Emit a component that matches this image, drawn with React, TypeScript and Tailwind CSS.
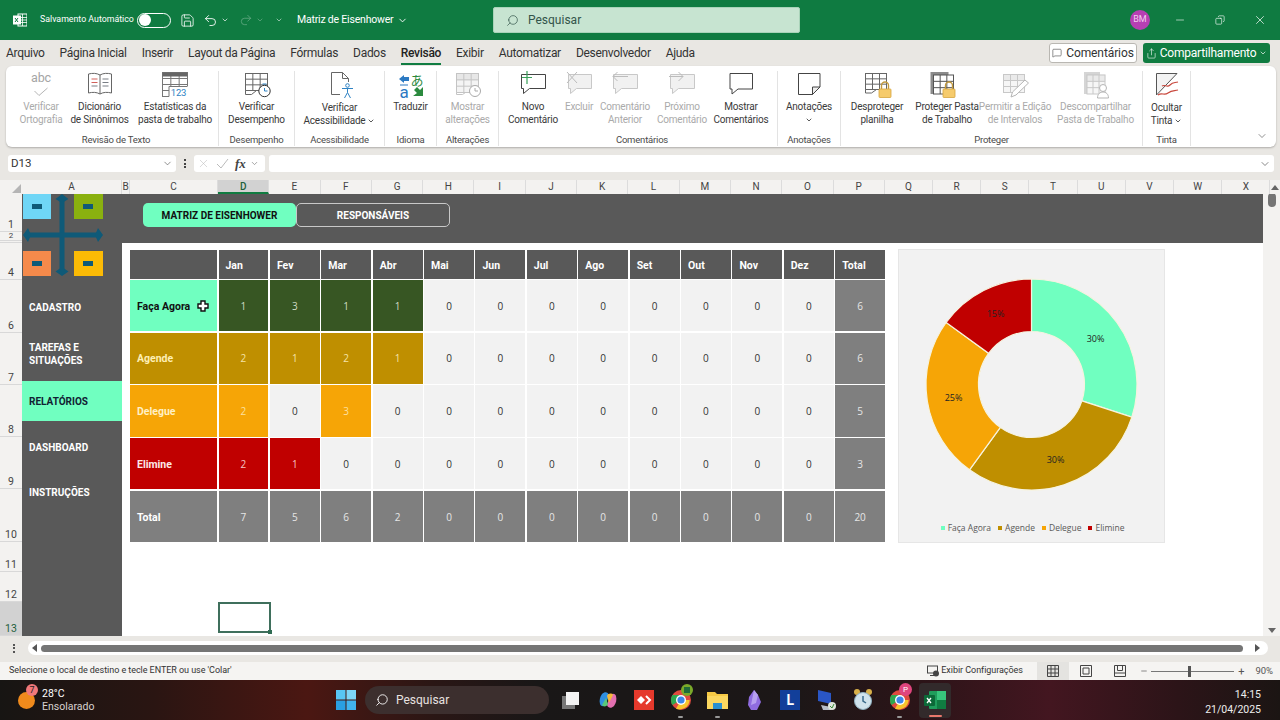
import React from "react";
import { ChevronDown, Copy, Minus, Search, Undo2, Redo2, X, Save, MessageSquare, Share } from "lucide-react";

const GridLines = ({ x = 4, y = 3, w = 24, h = 22, c = "#555", cols = 3, rows = 3, head = false, fill = "#fff" }: any) => (
  <g stroke={c} strokeWidth="1" fill="none">
    <rect x={x} y={y} width={w} height={h} fill={fill} />
    {head && <rect x={x} y={y} width={w} height={h / rows} fill={c} opacity=".25" />}
    {Array.from({ length: cols - 1 }).map((_, i) => (
      <line key={i} x1={x + ((i + 1) * w) / cols} x2={x + ((i + 1) * w) / cols} y1={y} y2={y + h} />
    ))}
    {Array.from({ length: rows - 1 }).map((_, i) => (
      <line key={i} y1={y + ((i + 1) * h) / rows} y2={y + ((i + 1) * h) / rows} x1={x} x2={x + w} />
    ))}
  </g>
);

const Bubble = ({ c = "#444", x = 5, y = 5, w = 25, h = 16, fill = "#fff" }: any) => (
  <path
    d={`M${x} ${y}H${x + w}V${y + h}H${x + 8}L${x + 2} ${y + h + 5}V${y + h}H${x}Z`}
    fill={fill}
    stroke={c}
    strokeWidth="1"
  />
);

const Lock = ({ x = 21, y = 10 }: any) => (
  <g>
    <path d={`M${x + 2.5} ${y + 8}v-3.5a3.5 3.5 0 0 1 7 0v3.5`} fill="none" stroke="#c29a3e" strokeWidth="1.4" />
    <rect x={x} y={y + 8} width="12" height="8.5" rx=".8" fill="#f6cb6c" stroke="#d5a53f" strokeWidth=".8" />
  </g>
);

const icons: Record<string, React.ReactNode> = {
  spell: (
    <g>
      <text x="18" y="11" textAnchor="middle" fontSize="12.5" fill="#a5a5a5" fontFamily="Roboto, sans-serif">abc</text>
      <path d="M11.5 20l4.5 4.5 8.5-7.5" fill="none" stroke="#b5b5b5" strokeWidth="1" />
    </g>
  ),
  book: (
    <g>
      <path d="M6.5 3c4-1 8-1 11.5 1 3.5-2 7.5-2 11.5-1v19c-4-1-8-1-11.5 1-3.5-2-7.5-2-11.5-1z" fill="#fff" stroke="#666" />
      <line x1="18" y1="4" x2="18" y2="23" stroke="#666" />
      <path d="M9.5 8h6M9.5 11.5h6" stroke="#d1605a" />
      <path d="M9.5 15h6M20.5 8h6M20.5 11.5h6M20.5 15h6" stroke="#7a7f86" />
    </g>
  ),
  stats: (
    <g>
      <GridLines x={5.5} y={1.5} w={25} h={24} cols={3} rows={4} c="#777" />
      <rect x="5.5" y="1.5" width="25" height="4" fill="#666" />
      <rect x="12" y="15" width="20" height="11" fill="#fff" />
      <path d="M5.5 25.5H12V15.5H30.5" fill="none" stroke="#777" />
      <text x="21.5" y="25" textAnchor="middle" fontSize="9.5" fill="#2f83c4" fontFamily="Roboto, sans-serif">123</text>
    </g>
  ),
  perf: (
    <g>
      <GridLines x={6.5} y={2.5} w={22} h={17} c="#666" />
      <path d="M6.5 19.5v4h6l5-4z" fill="#fff" stroke="#666" />
      <circle cx="25.5" cy="20" r="5.7" fill="#fff" stroke="#333" />
      <path d="M25.5 17V20h3" fill="none" stroke="#2f83c4" />
      <path d="M23.5 13h4" stroke="#2f83c4" />
    </g>
  ),
  access: (
    <g>
      <path d="M9.5 1.5h11l6 6v16h-17z" fill="#fff" stroke="#666" />
      <path d="M20.5 1.5v6h6" fill="none" stroke="#666" />
      <rect x="18" y="11" width="14" height="18" fill="#fff" />
      <circle cx="25.5" cy="14.5" r="1.8" fill="none" stroke="#2f83c4" />
      <path d="M20 17.5h11M25.5 17.5v4l-3 5.5M25.5 21.5l3 5.5" fill="none" stroke="#2f83c4" />
    </g>
  ),
  translate: (
    <g>
      <path d="M6 8l5-4v8z" fill="#2b79c2" />
      <rect x="10" y="6" width="6" height="4" fill="#2b79c2" />
      <path d="M7 14h8" stroke="#2b79c2" />
      <text x="6.5" y="27" fontSize="17" fill="#2b79c2" fontFamily="Roboto, sans-serif">a</text>
      <text x="17.5" y="14" fontSize="13" fill="#2b8a3e" fontFamily="'Noto Sans CJK JP', sans-serif">あ</text>
      <path d="M30 25H20l4-3-3-3 3-3 3 3 3-3z" fill="#2b8a3e" />
    </g>
  ),
  changes: (
    <g>
      <GridLines x={6.5} y={2.5} w={22} h={19} c="#c4c4c4" head fill="#f4f4f4" />
      <path d="M6.5 21.5v2h6l3-2z" fill="#fff" stroke="#c4c4c4" />
      <circle cx="25" cy="20" r="5.5" fill="#fff" stroke="#aaa" />
      <path d="M25 17v3h3" fill="none" stroke="#aaa" />
    </g>
  ),
  newc: (
    <g>
      <Bubble c="#444" x={6.5} y={3.5} w={24} h={14} />
      <path d="M12 0v13M7 6.5h10" stroke="#39a15a" strokeWidth="1.2" />
    </g>
  ),
  del: (
    <g>
      <Bubble c="#c8c8c8" x={7.5} y={3.5} w={23} h={14} fill="#f1f1f1" />
      <path d="M6 1l10 11M16 1L6 12" stroke="#bcbcbc" />
    </g>
  ),
  prev: (
    <g>
      <Bubble c="#c8c8c8" x={6.5} y={3.5} w={24} h={14} fill="#f1f1f1" />
      <path d="M21 5.5H6M10.5 1L6 5.5l4.5 4.5" fill="none" stroke="#bcbcbc" />
    </g>
  ),
  next: (
    <g>
      <Bubble c="#c8c8c8" x={6.5} y={3.5} w={24} h={14} fill="#f1f1f1" />
      <path d="M5 5.5h14M14.5 1L19 5.5 14.5 10" fill="none" stroke="#bcbcbc" />
    </g>
  ),
  show: <Bubble c="#444" x={7} y={2.5} w={22.5} h={15.5} />,
  note: (
    <g>
      <path d="M7.5 2.5h21.5v13.5l-7.5 7.5H7.5z" fill="#fff" stroke="#444" />
      <path d="M29 16h-7.5v7.5z" fill="#eee" stroke="#444" />
    </g>
  ),
  unprotect: (
    <g>
      <GridLines x={6.5} y={2.5} w={21} h={16} c="#666" />
      <path d="M6.5 18.5v3.5h6l5-3.5z" fill="#fff" stroke="#666" />
      <Lock x={20} y={10} />
    </g>
  ),
  protect: (
    <g>
      <rect x="1.5" y="1" width="18" height="22" fill="#8b8b8b" />
      <GridLines x={4.5} y={4} w={20} h={19} c="#555" />
      <Lock x={14} y={10} />
    </g>
  ),
  edit: (
    <g>
      <GridLines x={6.5} y={3.5} w={21} h={18} c="#c8c8c8" head fill="#f6f6f6" />
      <path d="M14 26l1.5-5L28 9l3.5 3L19 24z" fill="#fff" stroke="#b5b5b5" />
    </g>
  ),
  unshare: (
    <g>
      <rect x="6" y="1" width="16" height="22" fill="#d5d5d5" />
      <GridLines x={9} y={4} w={18} h={19} c="#c8c8c8" head fill="#f6f6f6" />
      <circle cx="25" cy="17" r="3.5" fill="#fff" stroke="#b5b5b5" />
      <path d="M19.5 27c0-4 2.5-6 5.5-6s5.5 2 5.5 6z" fill="#fff" stroke="#b5b5b5" />
    </g>
  ),
  ink: (
    <g>
      <path d="M7.5 2.5h20.5L7.5 24z" fill="#f3f3f3" stroke="#555" />
      <path d="M13 15c3-2 5 2 8-1s4-2 8-3" fill="none" stroke="#c9483d" strokeWidth="1.2" />
      <path d="M9 24c4-3 6 1 10-2s6-2 10-3" fill="none" stroke="#c9483d" strokeWidth="1.2" />
    </g>
  ),
};

type Item = { w: number; lines: string[]; icon: string; muted?: boolean; chev?: "inline" | "below"; low?: boolean };

const groups: { label: string; w: number; pl?: number; items: Item[] }[] = [
  {
    label: "Revisão de Texto",
    w: 205,
    items: [
      { w: 54, lines: ["Verificar", "Ortografia"], icon: "spell", muted: true },
      { w: 63, lines: ["Dicionário", "de Sinônimos"], icon: "book" },
      { w: 88, lines: ["Estatísticas da", "pasta de trabalho"], icon: "stats" },
    ],
  },
  { label: "Desempenho", w: 76, items: [{ w: 75, lines: ["Verificar", "Desempenho"], icon: "perf" }] },
  { label: "Acessibilidade", w: 90, items: [{ w: 89, lines: ["Verificar", "Acessibilidade"], icon: "access", chev: "inline", low: true }] },
  { label: "Idioma", w: 52, items: [{ w: 51, lines: ["Traduzir"], icon: "translate" }] },
  { label: "Alterações", w: 62, items: [{ w: 61, lines: ["Mostrar", "alterações"], icon: "changes", muted: true }] },
  {
    label: "Comentários",
    w: 279,
    pl: 8,
    items: [
      { w: 52, lines: ["Novo", "Comentário"], icon: "newc" },
      { w: 40, lines: ["Excluir"], icon: "del", muted: true },
      { w: 52, lines: ["Comentário", "Anterior"], icon: "prev", muted: true },
      { w: 62, lines: ["Próximo", "Comentário"], icon: "next", muted: true },
      { w: 56, lines: ["Mostrar", "Comentários"], icon: "show" },
    ],
  },
  { label: "Anotações", w: 63, items: [{ w: 62, lines: ["Anotações"], icon: "note", chev: "below" }] },
  {
    label: "Proteger",
    w: 302,
    items: [
      { w: 72, lines: ["Desproteger", "planilha"], icon: "unprotect" },
      { w: 68, lines: ["Proteger Pasta", "de Trabalho"], icon: "protect" },
      { w: 68, lines: ["Permitir a Edição", "de Intervalos"], icon: "edit", muted: true },
      { w: 93, lines: ["Descompartilhar", "Pasta de Trabalho"], icon: "unshare", muted: true },
    ],
  },
  { label: "Tinta", w: 48, items: [{ w: 47, lines: ["Ocultar", "Tinta"], icon: "ink", chev: "inline", low: true }] },
];

const tabs = ["Arquivo", "Página Inicial", "Inserir", "Layout da Página", "Fórmulas", "Dados", "Revisão", "Exibir", "Automatizar", "Desenvolvedor", "Ajuda"];

const colHeads: [string, number][] = [
  ["A", 100], ["B", 8], ["C", 88],
  ...["D", "E", "F", "G", "H", "I", "J", "K", "L", "M", "N", "O", "P"].map((c) => [c, 51.3] as [string, number]),
  ...["Q", "R", "S", "T", "U", "V", "W", "X"].map((c) => [c, 48.2] as [string, number]),
];

const rowHeads: [string, number, string][] = [
  ["1", 38, ""], ["2", 9, "text-[8px] !leading-[8px]"], ["", 2, ""], ["4", 37, ""], ["6", 53, ""], ["7", 52, ""], ["8", 52, ""], ["9", 52, ""], ["10", 53, ""], ["11", 30, ""], ["12", 30, ""], ["13", 34, ""],
];

const months = ["Jan", "Fev", "Mar", "Abr", "Mai", "Jun", "Jul", "Ago", "Set", "Out", "Nov", "Dez"];

const rows = [
  { name: "Faça Agora", vals: [1, 3, 1, 1, 0, 0, 0, 0, 0, 0, 0, 0], total: 6, bg: "bg-[#375623]", num: "text-[#cfdcc4]", label: "bg-[#70ffc0] text-[#111]" },
  { name: "Agende", vals: [2, 1, 2, 1, 0, 0, 0, 0, 0, 0, 0, 0], total: 6, bg: "bg-[#bf8f00]", num: "text-[#f5e3a8]", label: "bg-[#bf8f00] text-[#fdeeb5]" },
  { name: "Delegue", vals: [2, 0, 3, 0, 0, 0, 0, 0, 0, 0, 0, 0], total: 5, bg: "bg-[#f6a506]", num: "text-[#fde0a0]", label: "bg-[#f6a506] text-[#fff0c4]" },
  { name: "Elimine", vals: [2, 1, 0, 0, 0, 0, 0, 0, 0, 0, 0, 0], total: 3, bg: "bg-[#c00000]", num: "text-[#f6c3c3]", label: "bg-[#c00000] text-[#fde8e8]" },
];
const totals = [7, 5, 6, 2, 0, 0, 0, 0, 0, 0, 0, 0];

const slices = [
  { v: 30, c: "#70ffc0" },
  { v: 30, c: "#bf8f00" },
  { v: 25, c: "#f6a506" },
  { v: 15, c: "#c00000" },
];

function slicePath(a0: number, a1: number, R: number, r: number, cx: number, cy: number) {
  const p = (a: number, rad: number) => {
    const t = ((a - 25) * 2 * Math.PI) / 100;
    return `${cx + rad * Math.cos(t)} ${cy + rad * Math.sin(t)}`;
  };
  const large = a1 - a0 > 50 ? 1 : 0;
  return `M${p(a0, R)}A${R} ${R} 0 ${large} 1 ${p(a1, R)}L${p(a1, r)}A${r} ${r} 0 ${large} 0 ${p(a0, r)}Z`;
}

const Donut = () => {
  let acc = 0;
  return (
    <svg width="265" height="268" viewBox="0 0 265 268" className="block">
      {slices.map((s) => {
        const d = slicePath(acc, acc + s.v, 105.5, 53, 132.5, 134.5);
        acc += s.v;
        return <path key={s.c} d={d} fill={s.c} stroke="#f6f3df" strokeWidth="1.2" />;
      })}
      <g fontSize="9" fill="#222" textAnchor="middle" fontFamily="'Open Sans', sans-serif">
        <text x="196.5" y="92">30%</text>
        <text x="156.5" y="213">30%</text>
        <text x="54.5" y="151">25%</text>
        <text x="96.5" y="67">15%</text>
      </g>
    </svg>
  );
};

const Logo = () => (
  <svg width="100" height="86" viewBox="0 0 100 86" className="block">
    <rect x="1" y="0" width="28" height="25" fill="#6fd6f6" />
    <rect x="52" y="0" width="29" height="25" fill="#8ab10f" />
    <rect x="1" y="57" width="28" height="25" fill="#f58a4b" />
    <rect x="52" y="57" width="29" height="25" fill="#fcbb05" />
    <g fill="#0f5a78">
      <rect x="10" y="10" width="10" height="5" />
      <rect x="61" y="10" width="10" height="5" />
      <rect x="10" y="67" width="10" height="5" />
      <rect x="61" y="67" width="10" height="5" />
      <rect x="37.5" y="3" width="5" height="75" />
      <rect x="4" y="38.5" width="74" height="5" />
      <path d="M40 0l6.5 5-6.5 4-6.5-4zM40 82l6.5-4.5-6.5-4.5-6.5 4.5zM1 41l5-7 3 7-3 7zM81 41l-5-7-3 7 3 7z" />
    </g>
  </svg>
);

const TaskIcon = ({ children, className = "" }: { children: React.ReactNode; className?: string }) => (
  <div className={`relative w-[36.5px] h-full flex items-center justify-center shrink-0 ${className}`}>{children}</div>
);

const ChromeGlyph = () => (
  <svg width="22" height="22" viewBox="0 0 22 22">
    <circle cx="11" cy="11" r="10" fill="#e04a3f" />
    <path d="M11 11L2.4 16A10 10 0 0 1 2.4 6L11 6z" fill="#2fa84f" />
    <path d="M11 11l8.7 0A10 10 0 0 1 6 19.7z" fill="#f7c52d" />
    <circle cx="11" cy="11" r="5" fill="#fff" />
    <circle cx="11" cy="11" r="3.6" fill="#3f86e8" />
  </svg>
);

export default function App() {
  return (
    <div className="w-[1280px] h-[720px] flex flex-col overflow-hidden bg-[#e9e7e3] font-['Roboto',sans-serif] text-[#333]">
      {/* title bar */}
      <div className="h-[40px] shrink-0 bg-[#0f7b41] flex items-center text-white relative">
        <svg width="14" height="14" viewBox="0 0 14 14" className="ml-[13px] mr-[13px] shrink-0">
          <rect x="5" y="1" width="9" height="12" fill="none" stroke="#fff" />
          <path d="M5 4.5h9M5 7h9M5 9.5h9M9.5 1v12" stroke="#fff" strokeWidth=".8" />
          <rect x="0" y="2.5" width="8" height="9" fill="#fff" />
          <path d="M2 5l3 4M5 5L2 9" stroke="#0f7b41" />
        </svg>
        <span className="text-[8.8px] w-[97px] shrink-0 whitespace-nowrap">Salvamento Automático</span>
        <div className="w-[34px] h-[15px] rounded-full border border-white flex items-center px-[1px] shrink-0">
          <div className="w-[12px] h-[12px] rounded-full bg-white" />
        </div>
        <Save size={15} strokeWidth={1.3} className="ml-[9px] shrink-0" />
        <Undo2 size={15} strokeWidth={1.4} className="ml-[8px] shrink-0" />
        <ChevronDown size={8} className="ml-[3px] shrink-0" />
        <Redo2 size={14} strokeWidth={1.2} className="ml-[10px] shrink-0 text-[#6fb08d]" />
        <ChevronDown size={8} className="ml-[3px] shrink-0 text-[#6fb08d]" />
        <ChevronDown size={8} className="ml-[11px] shrink-0 text-[#cfe6d9]" />
        <span className="text-[10.5px] tracking-[-0.2px] ml-[14px] w-[95px] shrink-0 whitespace-nowrap">Matriz de Eisenhower</span>
        <ChevronDown size={11} className="ml-[5px] shrink-0" />
        <div className="ml-[85px] w-[307px] h-[26px] bg-[#c7e4d1] rounded-[2px] border border-[#a9d3b9] flex items-center pl-[12px] text-[#33544a] shrink-0">
          <Search size={13} strokeWidth={1.3} className="-scale-x-100" />
          <span className="text-[12px] ml-[9px]">Pesquisar</span>
        </div>
        <div className="ml-[330px] w-[20px] h-[20px] rounded-full bg-[#b63fb3] text-[9px] flex items-center justify-center text-[#f0d0ee] shrink-0">BM</div>
        <Minus size={12} strokeWidth={1.2} className="ml-[24px] shrink-0" />
        <Copy size={10} strokeWidth={1.5} className="ml-[29px] shrink-0 -scale-x-100" />
        <X size={14} strokeWidth={1.2} className="ml-[28px] shrink-0" />
      </div>

      {/* tabs */}
      <div className="h-[26px] shrink-0 flex items-center pl-[6px] pr-[10px]">
        <div className="flex gap-[15px] text-[12px] text-[#333] tracking-[-0.3px]">
          {tabs.map((t) => (
            <span key={t} className={t === "Revisão" ? "relative font-medium text-[#222] whitespace-nowrap" : "whitespace-nowrap"}>
              {t}
              {t === "Revisão" && <span className="absolute left-0 right-0 bottom-[-3px] h-[2px] bg-[#107c41]" />}
            </span>
          ))}
        </div>
        <div className="ml-auto flex gap-[6px]">
          <div className="w-[88px] h-[20px] bg-white border border-[#b9b7b2] rounded-[3px] flex items-center justify-center gap-[4px] text-[12px] tracking-[-0.1px]">
            <MessageSquare size={10} strokeWidth={1.3} />
            Comentários
          </div>
          <div className="w-[127px] h-[20px] bg-[#107c41] rounded-[3px] flex items-center justify-center gap-[3px] text-[12px] tracking-[-0.2px] text-white">
            <Share size={11} strokeWidth={1.3} />
            Compartilhamento
            <ChevronDown size={8} />
          </div>
        </div>
      </div>

      {/* ribbon */}
      <div className="h-[81px] shrink-0 mx-[6px] w-[1270px] bg-white rounded-[6px] shadow-[0_1px_2px_rgba(0,0,0,0.25)] flex pl-[8px] pr-[8px] text-[10px] tracking-[-0.2px] leading-[13px]">
        {groups.map((g) => (
          <div key={g.label} style={{ width: g.w, paddingLeft: g.pl ?? 0 }} className="mt-[5px] mb-[1px] shrink-0 border-r border-[#e3e3e3] flex flex-col">
            <div className="flex flex-1">
              {g.items.map((it) => (
                <div key={it.lines.join()} style={{ width: it.w }} className={`shrink-0 flex flex-col items-center whitespace-nowrap ${it.muted ? "text-[#aaa]" : "text-[#3a3a3a]"}`}>
                  <svg width="36" height="30" viewBox="0 0 36 30" className="shrink-0">
                    {icons[it.icon]}
                  </svg>
                  <div className={`text-center ${it.low ? "mt-0" : "-mt-[1px]"}`}>
                    {it.lines.map((l, i) => (
                      <div key={l} className="flex items-center justify-center gap-[2px]">
                        {l}
                        {it.chev === "inline" && i === it.lines.length - 1 && <ChevronDown size={8} strokeWidth={2.5} />}
                      </div>
                    ))}
                    {it.chev === "below" && (
                      <div className="flex justify-center h-[13px] items-center">
                        <ChevronDown size={8} strokeWidth={2.5} />
                      </div>
                    )}
                  </div>
                </div>
              ))}
            </div>
            <div className="text-center text-[9.5px] text-[#4a4a4a] h-[13px] leading-[13px]">{g.label}</div>
          </div>
        ))}
        <div className="ml-auto self-end mb-[5px] text-[#555]">
          <ChevronDown size={12} strokeWidth={1.3} />
        </div>
      </div>

      {/* formula bar */}
      <div className="h-[17px] mt-[8px] shrink-0 flex items-stretch pl-[8px] pr-[6px]">
        <div className="w-[168px] bg-white rounded-[3px] flex items-center justify-between pl-[3px] pr-[3px] text-[11.5px] text-[#333]">
          D13
          <ChevronDown size={11} strokeWidth={1.4} className="text-[#555]" />
        </div>
        <div className="w-[18px] flex flex-col items-center justify-center gap-[1.5px]">
          <span className="w-[2px] h-[2px] bg-[#444]" />
          <span className="w-[2px] h-[2px] bg-[#444]" />
          <span className="w-[2px] h-[2px] bg-[#444]" />
        </div>
        <div className="w-[71px] bg-white rounded-[3px] flex items-center pl-[3px] gap-[6px] text-[#bbb]">
          <X size={13} strokeWidth={1} />
          <svg width="13" height="13" viewBox="0 0 13 13"><path d="M1 7l4 4 7-9" fill="none" stroke="#bbb" /></svg>
          <span className="font-['Liberation_Serif',serif] italic font-bold text-[13px] text-[#444] leading-none">fx</span>
          <ChevronDown size={9} className="text-[#888] -ml-[2px]" />
        </div>
        <div className="ml-[4px] flex-1 bg-white rounded-[3px] flex items-center justify-end pr-[3px]">
          <ChevronDown size={12} strokeWidth={1.4} className="text-[#555]" />
        </div>
      </div>

      {/* column headers */}
      <div className="h-[14px] mt-[8px] shrink-0 flex bg-[#f3f2f0] text-[10px] text-[#444] leading-[14px] overflow-hidden">
        <div className="w-[22px] shrink-0 flex items-end justify-end pr-[1px] pb-[1px]">
          <div className="w-0 h-0 border-l-[9px] border-l-transparent border-b-[9px] border-b-[#b5b5b5]" />
        </div>
        {colHeads.map(([c, w]) => (
          <div key={c} style={{ width: w }} className={`shrink-0 text-center border-r border-[#dcdcdc] ${c === "D" ? "bg-[#d2d2d2] border-b-2 border-b-[#107c41] font-medium text-[#1f5f3a]" : ""}`}>
            {c}
          </div>
        ))}
        <div className="flex-1 flex items-center justify-center text-[#555] bg-[#f3f2f0] relative">
          <div className="w-0 h-0 border-x-[4px] border-x-transparent border-b-[5px] border-b-[#666]" />
        </div>
      </div>

      {/* sheet */}
      <div className="h-[442px] shrink-0 flex relative bg-white overflow-hidden">
        <div className="w-[22px] shrink-0 flex flex-col bg-[#f3f2f0] text-[10.5px] text-[#444]">
          {rowHeads.map(([r, h, cls], i) => (
            <div key={i} style={{ height: h }} className={`shrink-0 flex items-end justify-center border-b border-[#d8d8d8] leading-[12px] overflow-hidden ${cls} ${r === "13" ? "bg-[#d2d2d2] text-[#1f5f3a]" : ""}`}>
              {r}
            </div>
          ))}
        </div>

        <div className="w-[100px] shrink-0 bg-[#595959] flex flex-col font-bold text-[10px] leading-[13px] text-white">
          <div className="h-[88px] shrink-0"><Logo /></div>
          <div className="h-[50px] shrink-0 pl-[7px] flex items-center">CADASTRO</div>
          <div className="h-[49px] shrink-0 pl-[7px] pb-[5px] flex items-center">TAREFAS E<br />SITUAÇÕES</div>
          <div className="h-[40px] shrink-0 pl-[7px] flex items-center bg-[#70ffc0] text-[#123] w-[100px]">RELATÓRIOS</div>
          <div className="h-[52px] shrink-0 pl-[7px] flex items-center">DASHBOARD</div>
          <div className="h-[38px] shrink-0 pl-[7px] flex items-center">INSTRUÇÕES</div>
        </div>

        <div className="flex-1 flex flex-col font-['Open_Sans',sans-serif]">
          <div className="h-[49px] shrink-0 bg-[#595959] flex items-start pt-[9px] pl-[21px] font-['Roboto',sans-serif] text-[10px] font-bold">
            <div className="w-[153px] h-[24px] bg-[#70ffc0] rounded-[5px] flex items-center justify-center text-[#111]">MATRIZ DE EISENHOWER</div>
            <div className="w-[154px] h-[24px] border border-[#c8c8c8] rounded-[5px] flex items-center justify-center text-white">RESPONSÁVEIS</div>
          </div>
          <div className="flex pt-[6px] pl-[8px] items-start">
            <div className="mt-[1px] grid grid-cols-[87px_repeat(13,49.9px)] grid-rows-[28.5px_repeat(5,51.2px)] gap-[1.5px] text-[10px] shrink-0">
              <div className="bg-[#595959]" />
              {[...months, "Total"].map((m) => (
                <div key={m} className="bg-[#595959] text-white font-['Roboto',sans-serif] font-bold text-[10.5px] flex items-center pl-[7px] pt-[3px]">{m}</div>
              ))}
              {rows.map((r) => (
                <React.Fragment key={r.name}>
                  <div className={`font-['Roboto',sans-serif] font-bold text-[10.5px] flex items-center pl-[7px] pt-[2px] ${r.label}`}>{r.name}</div>
                  {r.vals.map((v, i) => (
                    <div key={i} className={`flex items-center justify-center pt-[1px] ${v > 0 ? `${r.bg} ${r.num}` : "bg-[#f2f2f2] text-[#333]"}`}>{v}</div>
                  ))}
                  <div className="bg-[#7f7f7f] text-[#e6e6e6] flex items-center justify-center pt-[1px]">{r.total}</div>
                </React.Fragment>
              ))}
              <div className="bg-[#7f7f7f] text-white font-['Roboto',sans-serif] font-bold text-[10.5px] flex items-center pl-[7px] pt-[3px]">Total</div>
              {totals.map((v, i) => (
                <div key={i} className="bg-[#7f7f7f] text-[#e6e6e6] flex items-center justify-center pt-[3px]">{v}</div>
              ))}
              <div className="bg-[#7f7f7f] text-[#e6e6e6] flex items-center justify-center pt-[3px]">20</div>
            </div>
            <div className="ml-[13px] w-[267px] h-[294px] bg-[#f2f2f2] border border-[#e6e6e6] shrink-0 flex flex-col items-center">
              <Donut />
              <div className="flex items-center gap-[7px] text-[8.5px] text-[#595959] mt-[4px] ml-[2px]">
                {[["Faça Agora", "bg-[#70ffc0]"], ["Agende", "bg-[#bf8f00]"], ["Delegue", "bg-[#f6a506]"], ["Elimine", "bg-[#c00000]"]].map(([t, c]) => (
                  <span key={t} className="flex items-center gap-[3px]">
                    <span className={`w-[4px] h-[4px] ${c}`} />
                    {t}
                  </span>
                ))}
              </div>
            </div>
          </div>
        </div>

        <div className="w-[17px] shrink-0 bg-[#f3f2f0] flex flex-col items-center relative">
          <div className="w-[8px] h-[14px] mt-[-1px] bg-[#757575] rounded-[4px]" />
          <div className="mt-auto mb-[3px] w-0 h-0 border-x-[4px] border-x-transparent border-t-[5px] border-t-[#666]" />
        </div>

        {/* selected cell and pointer */}
        <div className="absolute left-[218px] top-[408px] w-[53px] h-[31px] border-2 border-[#3f6f5c]">
          <span className="absolute right-[-3px] bottom-[-3px] w-[4px] h-[4px] bg-[#2f6b52]" />
        </div>
        <svg width="12" height="12" viewBox="0 0 12 12" className="absolute left-[197px] top-[106px]">
          <path d="M4 1h4v3h3v4H8v3H4V8H1V4h3z" fill="#fff" stroke="#111" strokeWidth="1.4" />
        </svg>
      </div>

      {/* horizontal scrollbar */}
      <div className="h-[14px] mt-[5px] shrink-0 flex items-center">
        <div className="w-[28px] flex flex-col items-center gap-[1.5px] pl-0">
          <span className="w-[2px] h-[2px] bg-[#555]" />
          <span className="w-[2px] h-[2px] bg-[#555]" />
          <span className="w-[2px] h-[2px] bg-[#555]" />
        </div>
        <div className="w-[1240px] h-[14px] bg-white rounded-[7px] flex items-center">
          <div className="ml-[4px] w-0 h-0 border-y-[4px] border-y-transparent border-r-[5px] border-r-[#555]" />
          <div className="ml-[4px] w-[1202px] h-[7px] rounded-full bg-[#757575]" />
          <div className="ml-[12px] w-0 h-0 border-y-[4px] border-y-transparent border-l-[5px] border-l-[#555]" />
        </div>
      </div>

      {/* status bar */}
      <div className="h-[18px] mt-[7px] shrink-0 bg-[#f5f4f2] flex items-center pl-[9px] text-[9px] tracking-[-0.05px] text-[#333]">
        <span className="whitespace-nowrap">Selecione o local de destino e tecle ENTER ou use 'Colar'</span>
        <div className="ml-auto flex items-center h-full">
          <svg width="13" height="12" viewBox="0 0 13 12" className="mr-[1px]">
            <rect x=".5" y="1" width="10" height="7" fill="none" stroke="#444" />
            <path d="M3 10.5h4" stroke="#444" />
            <circle cx="9" cy="8.5" r="3" fill="#444" />
          </svg>
          <span className="w-[96px] whitespace-nowrap pl-0">Exibir Configurações</span>
          <div className="w-[32px] h-full bg-[#e4e3e0] flex items-center justify-center">
            <svg width="12" height="12" viewBox="0 0 12 12"><path d="M.5.5h11v11H.5zM4 .5v11M8 .5v11M.5 4h11M.5 8h11" fill="none" stroke="#444" /></svg>
          </div>
          <div className="w-[34px] flex justify-center">
            <svg width="12" height="12" viewBox="0 0 12 12"><path d="M.5.5h11v11H.5zM3 3h6v6H3z" fill="none" stroke="#444" /></svg>
          </div>
          <div className="w-[33px] flex justify-center">
            <svg width="12" height="12" viewBox="0 0 12 12"><path d="M.5.5h11v11H.5zM3.5.5v5h5v-5M.5 8h11" fill="none" stroke="#444" /></svg>
          </div>
          <Minus size={8} className="ml-[4px] text-[#555]" />
          <div className="ml-[3px] w-[83px] h-px bg-[#777] relative">
            <span className="absolute left-[37px] top-[-5px] w-[3px] h-[11px] bg-[#555]" />
          </div>
          <span className="ml-[4px] text-[11px] leading-none text-[#555]">+</span>
          <span className="ml-[11px] mr-[7px] text-[#555] text-[9.5px]">90%</span>
        </div>
      </div>

      {/* taskbar */}
      <div className="h-[40px] shrink-0 flex items-center text-white bg-[linear-gradient(90deg,#171513_0%,#2a1512_12%,#4b1712_24%,#2a1715_34%,#191717_42%,#1c1717_62%,#2c1418_72%,#431620_82%,#2c1418_92%,#1b1513_100%)]">
        <div className="relative ml-[18px] w-[17px] h-[17px] rounded-full bg-[#f08a1c] shrink-0">
          <span className="absolute -top-[8px] left-[8px] w-[12px] h-[12px] rounded-full bg-[#f0787a] text-[9px] leading-[12px] text-center text-[#222]">7</span>
        </div>
        <div className="ml-[7px] w-[60px] shrink-0 text-[10.5px] leading-[13px]">
          <div>28°C</div>
          <div className="text-[#d8d2d0]">Ensolarado</div>
        </div>
        <svg width="20" height="20" viewBox="0 0 20 20" className="ml-[234px] shrink-0">
          <rect width="9.5" height="9.5" fill="#58c6f5" />
          <rect x="10.5" width="9.5" height="9.5" fill="#7ed6f8" />
          <rect y="10.5" width="9.5" height="9.5" fill="#2a9fe2" />
          <rect x="10.5" y="10.5" width="9.5" height="9.5" fill="#42b4ee" />
        </svg>
        <div className="ml-[9px] w-[184px] h-[28px] rounded-full bg-[#3c2f2e] flex items-center pl-[10px] shrink-0">
          <Search size={14} strokeWidth={1.5} className="-scale-x-100" />
          <span className="ml-[7px] text-[12px] text-[#e8e2e0]">Pesquisar</span>
        </div>
        <div className="ml-[3px] flex items-center h-full shrink-0 pl-[1px]">
          <TaskIcon>
            <svg width="20" height="20" viewBox="0 0 20 20"><rect x="1" y="6" width="13" height="13" fill="#777" /><rect x="5" y="2" width="13" height="13" fill="#f2f2f2" /></svg>
          </TaskIcon>
          <TaskIcon>
            <svg width="20" height="20" viewBox="0 0 20 20">
              <path d="M4 4c3-3 6-2 7 1l-3 9c-1 3-5 3-6 0-1-4 0-7 2-10z" fill="#2f8fe0" />
              <path d="M16 16c-3 3-6 2-7-1l3-9c1-3 5-3 6 0 1 4 0 7-2 10z" fill="#e36fb0" />
              <path d="M9 6c1-3 5-3 6-1l-4 8z" fill="#f4b93a" />
              <path d="M10 14c-1 3-5 3-6 1l4-7z" fill="#58c77a" />
            </svg>
          </TaskIcon>
          <TaskIcon>
            <svg width="20" height="20" viewBox="0 0 20 20"><rect width="20" height="20" fill="#e5392c" /><path d="M7 6l-4 4 4 4 4-4z" fill="#fff" /><path d="M12 6l4 4-4 4" fill="none" stroke="#fff" strokeWidth="2" /></svg>
          </TaskIcon>
          <TaskIcon>
            <ChromeGlyph />
            <span className="absolute top-[4px] right-[6px] w-[12px] h-[12px] rounded-full bg-[#7aa92a] flex items-center justify-center"><span className="w-[6px] h-[6px] bg-[#1f6b3a]" /></span>
            <span className="absolute bottom-[2px] w-[5px] h-[2px] rounded-full bg-[#999]" />
          </TaskIcon>
          <TaskIcon>
            <svg width="21" height="20" viewBox="0 0 21 20"><path d="M0 2h8l2 2h11v15H0z" fill="#f6c945" /><rect y="6" width="21" height="13" fill="#fbd75f" /><rect x="6" y="13" width="9" height="6" fill="#2a8fd0" /></svg>
            <span className="absolute bottom-[2px] w-[5px] h-[2px] rounded-full bg-[#999]" />
          </TaskIcon>
          <TaskIcon>
            <svg width="14" height="20" viewBox="0 0 14 20"><path d="M7 0l4 5 3 7-4 8H4L1 15l1-8z" fill="#8f6ce0" /><path d="M7 0l4 5-2 8-5 2z" fill="#b7a0f0" /></svg>
          </TaskIcon>
          <TaskIcon>
            <div className="w-[20px] h-[20px] bg-[#123f9a] flex items-center justify-center text-[14px] font-bold text-white leading-none">L</div>
          </TaskIcon>
          <TaskIcon>
            <svg width="20" height="22" viewBox="0 0 20 22"><path d="M1 1l13 3v11L1 12z" fill="#2a56c6" /><path d="M4 16l10 2v3H6z" fill="#b8bec8" /><circle cx="15" cy="17" r="4" fill="#dfe6dc" /><path d="M13 17l2 2 2-4" fill="none" stroke="#3a8a3a" /></svg>
          </TaskIcon>
          <TaskIcon>
            <svg width="20" height="22" viewBox="0 0 20 22"><circle cx="4" cy="3" r="3" fill="#d8b04a" /><circle cx="16" cy="3" r="3" fill="#d8b04a" /><circle cx="10" cy="12" r="8.5" fill="#cfe2ec" stroke="#8fb0c0" /><path d="M10 7v5l3 2" fill="none" stroke="#3a6a8a" strokeWidth="1.5" /></svg>
          </TaskIcon>
          <TaskIcon>
            <ChromeGlyph />
            <span className="absolute top-[3px] right-[6px] w-[13px] h-[13px] rounded-full bg-[#e0457e] text-[8px] leading-[13px] text-center text-white">P</span>
            <span className="absolute bottom-[2px] w-[5px] h-[2px] rounded-full bg-[#999]" />
          </TaskIcon>
          <div className="relative ml-[1px] w-[32px] h-[35px] rounded-[4px] bg-[#322a2b] flex items-center justify-center shrink-0">
            <svg width="22" height="20" viewBox="0 0 22 20">
              <rect x="5" y="1" width="17" height="18" rx="1" fill="#1f9d5b" />
              <rect x="13" y="1" width="9" height="9" fill="#37c47b" />
              <rect x="13" y="10" width="9" height="9" fill="#107c41" />
              <rect x="0" y="5" width="11" height="11" rx="1" fill="#0c6a38" />
              <path d="M3 8l4 5M7 8l-4 5" stroke="#fff" strokeWidth="1.3" />
            </svg>
            <span className="absolute bottom-[1px] w-[13px] h-[2px] rounded-full bg-[#e8786c]" />
          </div>
        </div>
        <div className="ml-auto mr-[19px] pt-[3px] text-right text-[10.5px] leading-[15px] text-[#eee]">
          <div>14:15</div>
          <div>21/04/2025</div>
        </div>
      </div>
    </div>
  );
}
